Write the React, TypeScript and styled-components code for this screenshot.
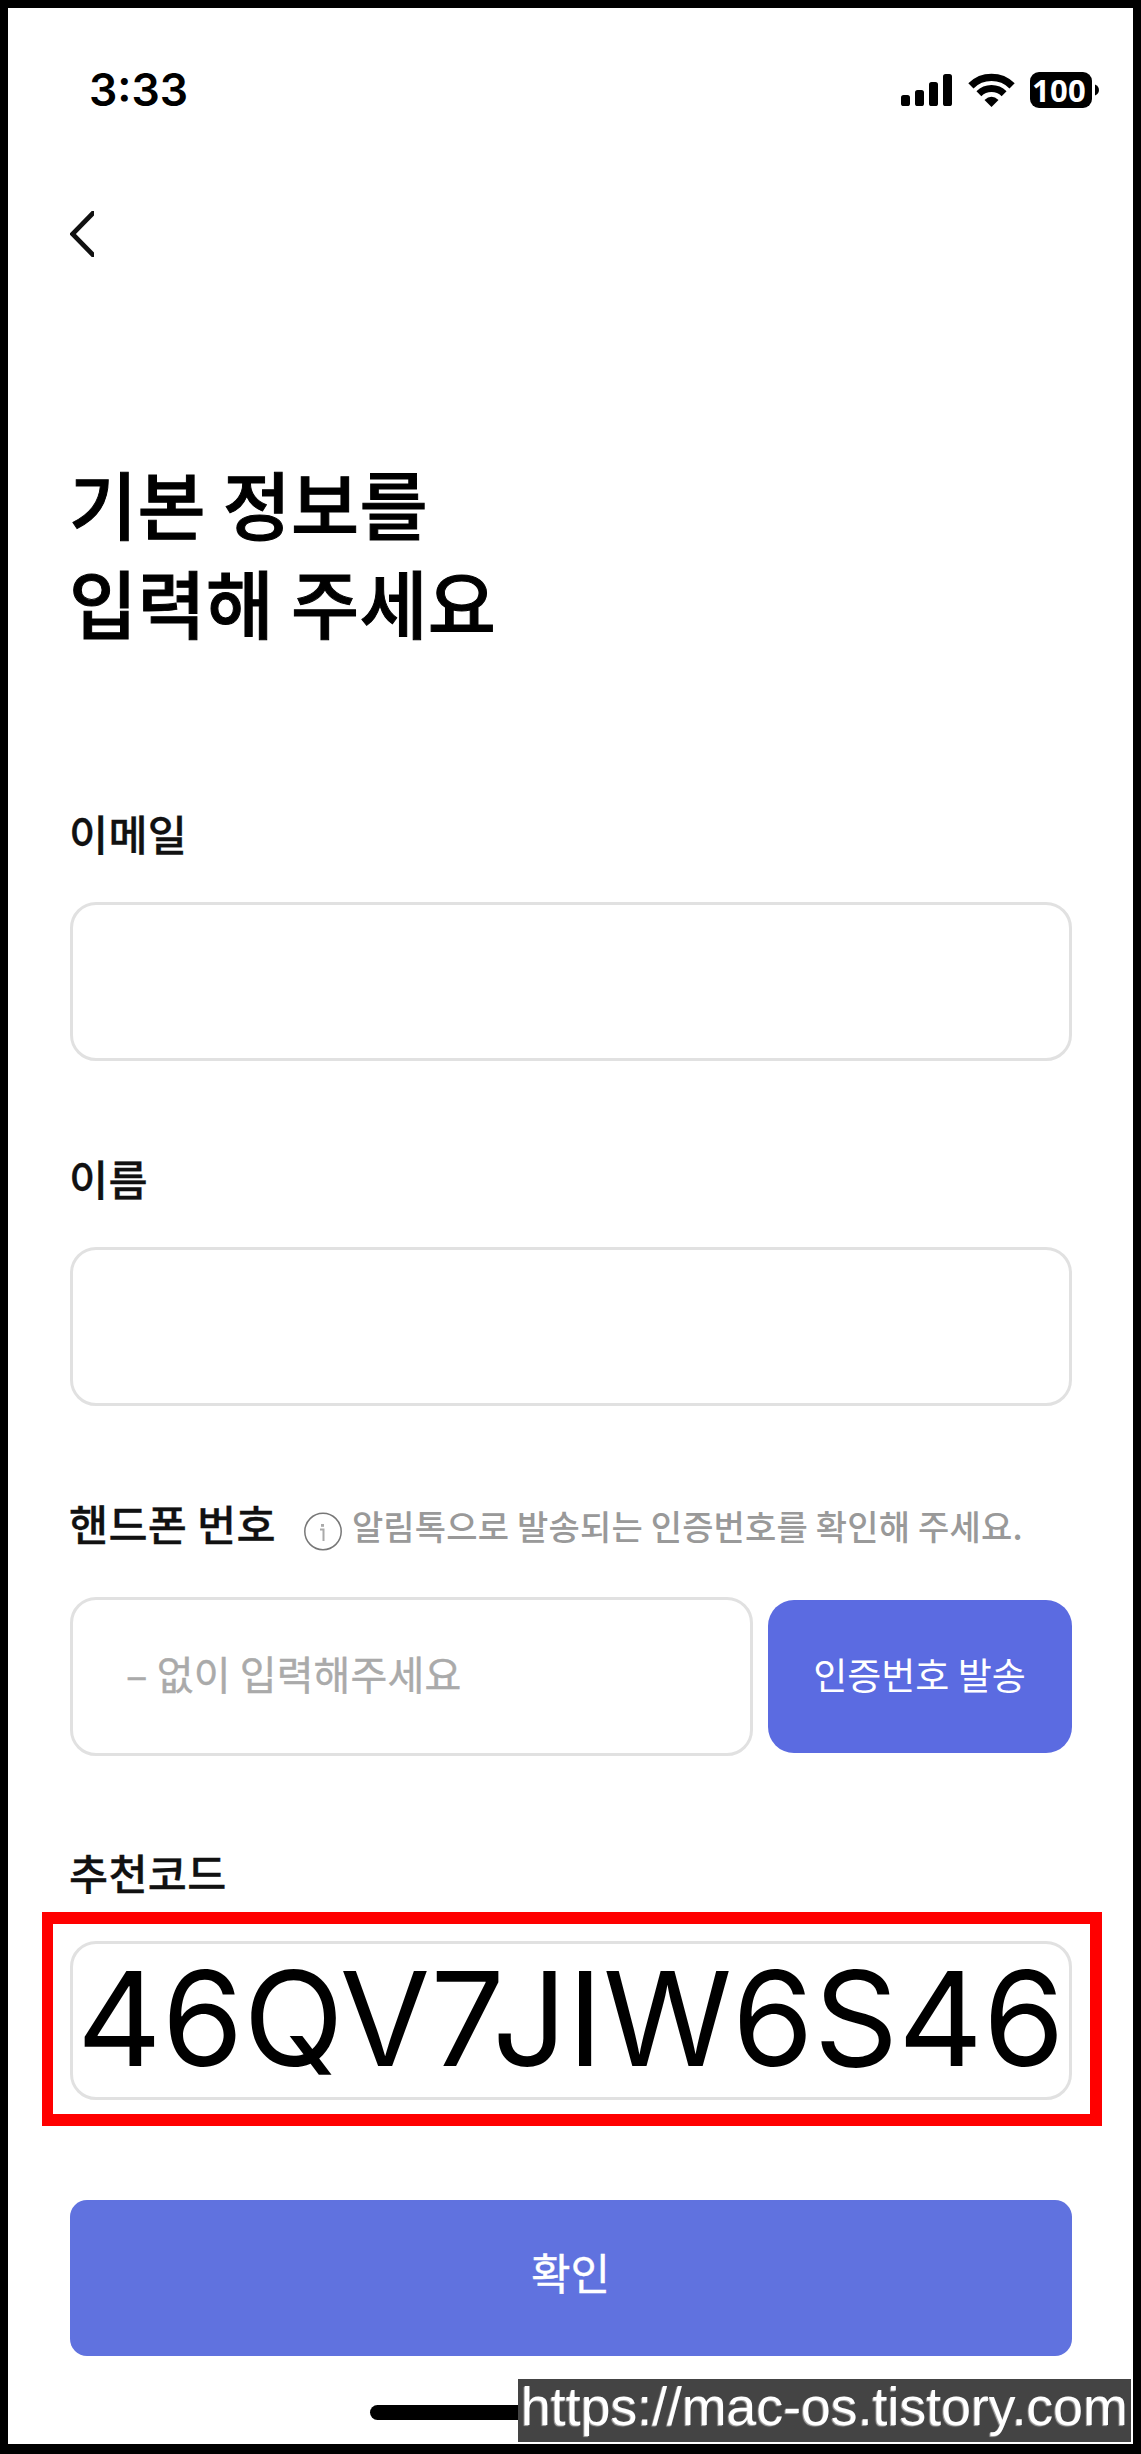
import React from 'react';
import styled, { createGlobalStyle } from 'styled-components';

const korean = '"Noto Sans CJK KR", "Noto Sans", sans-serif';

const GlobalStyle = createGlobalStyle`
  *, *::before, *::after { box-sizing: border-box; }
  body { margin: 0; background: #000; font-family: ${korean}; }
`;

const Screen = styled.main`
  position: relative;
  display: flex;
  flex-direction: column;
  width: 1141px;
  height: 2454px;
  padding: 0 61px 0 62px;
  border: 8px solid #000;
  border-bottom-width: 10px;
  background: #fff;
  overflow: hidden;
`;

const StatusBar = styled.header`
  display: flex;
  align-items: center;
  height: 36px;
  margin: 64px -27px 0 19px;
`;

const Time = styled.span`
  flex: 1;
  font: 600 44.5px/37px Inter, sans-serif;
  color: #000;
`;

const Signal = styled.svg`
  display: block;
  margin-right: 16px;
`;

const Wifi = styled.svg`
  display: block;
  margin-right: 15px;
`;

const Battery = styled.div`
  display: flex;
  align-items: center;
  gap: 3px;
`;

const BatteryBody = styled.span`
  width: 62px;
  height: 36px;
  padding-left: 2px;
  border-radius: 9px;
  background: #000;
  color: #fff;
  font: 700 31px/36px "Noto Sans", sans-serif;
  letter-spacing: 0.3px;
`;

const BackButton = styled.button`
  display: block;
  align-self: flex-start;
  width: 24px;
  height: 46px;
  margin-top: 103px;
  padding: 0;
  border: 0;
  background: none;

  svg { display: block; }
`;

const Title = styled.h1`
  height: 198px;
  margin: 195px 0 5px -1px;
  font: 500 74px/99px ${korean};
  -webkit-text-stroke: 1px #000;
  letter-spacing: 0.3px;
  color: #000;
`;

const Form = styled.form`
  display: flex;
  flex-direction: column;
  margin-top: 148px;
`;

const Field = styled.section<{ $height: number; $gap: number }>`
  display: flex;
  flex-direction: column;
  height: ${(p) => p.$height}px;
  gap: ${(p) => p.$gap}px;
`;

const LabelRow = styled.div`
  display: flex;
  align-items: flex-start;
  height: 60px;
`;

const Label = styled.label`
  margin-left: -1px;
  font: 500 42.5px/60px ${korean};
  -webkit-text-stroke: 0.3px #111;
  letter-spacing: 0.3px;
  color: #111;
  white-space: nowrap;
`;

const Hint = styled.span`
  display: flex;
  align-items: flex-start;
  margin-left: 28px;
  font: 500 34px/65px ${korean};
  letter-spacing: 0.18px;
  color: #999;
  white-space: nowrap;

  svg { margin: 19px 10px 0 0; flex: none; }
`;

const InputRow = styled.div`
  display: flex;
  align-items: center;
  gap: 15px;
`;

const InputBox = styled.div<{ $width?: number }>`
  display: flex;
  align-items: center;
  width: ${(p) => (p.$width ? `${p.$width}px` : '100%')};
  height: 159px;
  border: 3px solid #e1e1e1;
  border-radius: 26px;
  background: #fff;
`;

const Placeholder = styled.span`
  padding: 0 0 7px 53px;
  font: 400 40px/60px ${korean};
  -webkit-text-stroke: 0.4px #aaa;
  letter-spacing: 0.15px;
  color: #aaa;
  white-space: pre;
`;

const Code = styled.span`
  padding: 0 0 4px 4px;
  font: 400 131px/149px Inter, sans-serif;
  letter-spacing: 0.35px;
  color: #000;
  white-space: nowrap;
`;

const SendButton = styled.button`
  width: 304px;
  height: 153px;
  padding: 0 1px 6px 0;
  border: 0;
  border-radius: 26px;
  background: #5b6be1;
  color: #fff;
  font: 400 37px/60px ${korean};
  white-space: nowrap;
`;

const SubmitButton = styled.button`
  height: 156px;
  padding: 0 1px 14px 0;
  border: 0;
  border-radius: 17px;
  background: #6072df;
  color: #fff;
  font: 400 43px/60px ${korean};
  -webkit-text-stroke: 0.4px #fff;
`;

const Highlight = styled.div`
  position: absolute;
  left: 34px;
  top: 1904px;
  width: 1060px;
  height: 214px;
  border: 12px solid #f00;
  border-left-width: 11px;
  pointer-events: none;
`;

const HomeIndicator = styled.div`
  width: 403px;
  height: 15px;
  margin: 49px auto 0;
  border-radius: 8px;
  background: #000;
`;

const Watermark = styled.div`
  position: absolute;
  right: 2px;
  bottom: 2px;
  width: 613px;
  height: 63px;
  padding-left: 3px;
  background: #444;
  color: #fff;
  font: 400 53.5px/56px "Liberation Sans", Arial, sans-serif;
  letter-spacing: 0.05px;
  text-shadow: -1px 1px 1px #aaa;
  white-space: nowrap;
`;

const bars = [
  { x: 0, h: 11 },
  { x: 14, h: 16 },
  { x: 28, h: 24 },
  { x: 42, h: 32 },
];

export default function App() {
  return (
    <>
      <GlobalStyle />
      <Screen>
        <StatusBar>
          <Time>3:33</Time>
          <Signal width="51" height="34" viewBox="0 0 51 34">
            {bars.map((b) => (
              <rect key={b.x} x={b.x} y={33 - b.h} width="9" height={b.h} rx="2.6" />
            ))}
          </Signal>
          <Wifi width="47" height="34" viewBox="0 0 47 34">
            <g fill="none" stroke="#000">
              <path d="M2.9 12.8A29.4 29.4 0 0 1 44.1 12.8" strokeWidth="7.4" />
              <path d="M10.9 20.7A18 18 0 0 1 36.1 20.7" strokeWidth="7" />
            </g>
            <path d="M23.5 34L16.5 27Q23.5 20.6 30.5 27Z" />
          </Wifi>
          <Battery>
            <BatteryBody>100</BatteryBody>
            <svg width="4" height="12" viewBox="0 0 4 12">
              <path d="M0 0.5C5.3 2.5 5.3 9.5 0 11.5Z" />
            </svg>
          </Battery>
        </StatusBar>

        <BackButton type="button" aria-label="뒤로">
          <svg width="24" height="46" viewBox="0 0 24 46">
            <path d="M26 -1L2.5 23L26 47" fill="none" stroke="#111" strokeWidth="4.7" />
          </svg>
        </BackButton>

        <Title>
          기본 정보를
          <br />
          입력해 주세요
        </Title>

        <Form>
          <Field $height={345} $gap={39}>
            <LabelRow>
              <Label>이메일</Label>
            </LabelRow>
            <InputBox />
          </Field>
          <Field $height={345} $gap={39}>
            <LabelRow>
              <Label>이름</Label>
            </LabelRow>
            <InputBox />
          </Field>
          <Field $height={349} $gap={44}>
            <LabelRow>
              <Label>핸드폰 번호</Label>
              <Hint>
                <svg width="38" height="39" viewBox="0 0 38 39">
                  <circle cx="19" cy="19.5" r="18.2" fill="none" stroke="#777" strokeWidth="1.5" />
                  <path d="M16 17.5H19.5V29" fill="none" stroke="#aaa" strokeWidth="2" />
                  <rect x="17" y="12" width="3" height="2.8" fill="#aaa" />
                </svg>
                알림톡으로 발송되는 인증번호를 확인해 주세요.
              </Hint>
            </LabelRow>
            <InputRow>
              <InputBox $width={683}>
                <Placeholder>– 없이 입력해주세요</Placeholder>
              </InputBox>
              <SendButton type="button">인증번호 발송</SendButton>
            </InputRow>
          </Field>
          <Field $height={358} $gap={39}>
            <LabelRow>
              <Label>추천코드</Label>
            </LabelRow>
            <InputBox>
              <Code>46QV7JIW6S46</Code>
            </InputBox>
          </Field>
          <SubmitButton type="button">확인</SubmitButton>
        </Form>

        <HomeIndicator />
        <Highlight />
        <Watermark>https://mac-os.tistory.com</Watermark>
      </Screen>
    </>
  );
}
